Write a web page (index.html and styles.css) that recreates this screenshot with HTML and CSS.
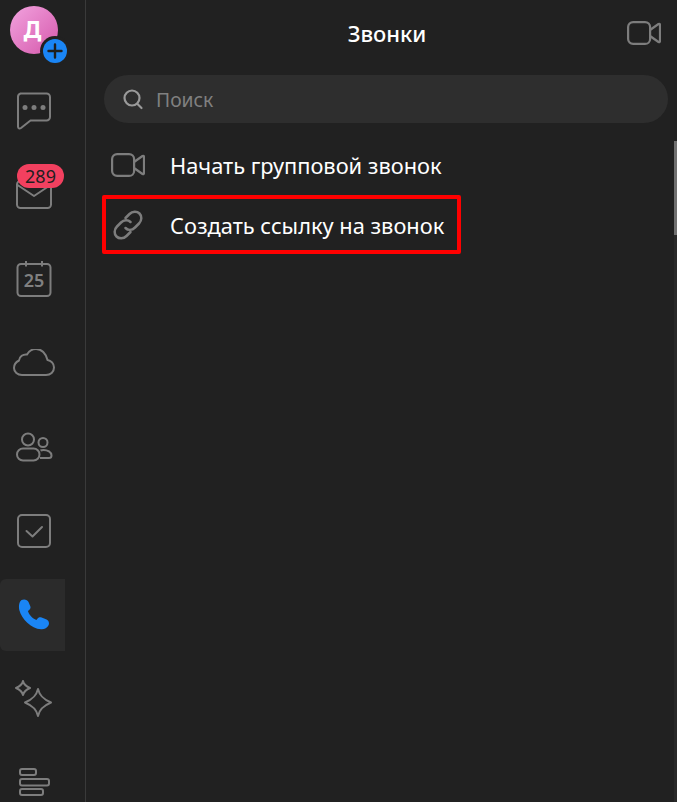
FILE: index.html
```html
<!DOCTYPE html>
<html lang="ru">
<head>
    <meta charset="UTF-8">
    <title>Звонки</title>
    <link rel="stylesheet" href="styles.css">
</head>
<body>
    <div class="app">
        <nav class="sidebar">
            <div class="avatar">
                <div class="avatar-circle">Д</div>
                <div class="avatar-add">
                    <svg width="24" height="24" viewBox="0 0 24 24"><circle cx="12" cy="12" r="12" fill="#1a85f5"/><path d="M12 5.500v13M5.500 12h13" stroke="#1f1f1f" stroke-width="2.400" stroke-linecap="round"/></svg>
                </div>
            </div>
            <div class="nav-list">
                <div class="nav-item">
                    <svg width="36" height="38" viewBox="0 0 36 38" fill="none" stroke="#7d7d7d" stroke-width="2"><path d="M4.500 1.500h26a3.500 3.500 0 0 1 3.500 3.500v20a3.500 3.500 0 0 1-3.500 3.500H14.500L5 36c-1.500 1-3 .5-3-1.500V5A3.500 3.500 0 0 1 4.500 1.500z" stroke-linejoin="round"/><circle cx="9" cy="15.500" r="2.500" fill="#7d7d7d" stroke="none"/><circle cx="18" cy="15.500" r="2.500" fill="#7d7d7d" stroke="none"/><circle cx="27" cy="15.500" r="2.500" fill="#7d7d7d" stroke="none"/></svg>
                </div>
                <div class="nav-item">
                    <svg width="38" height="30" viewBox="0 0 38 30" fill="none" stroke="#7d7d7d" stroke-width="2"><rect x="2" y="1" width="34" height="27" rx="3.500"/><path d="M2.500 5L19 16 35.500 5" stroke-linejoin="round"/></svg>
                    <span class="badge">289</span>
                </div>
                <div class="nav-item">
                    <div class="calendar">
                        <svg width="36" height="36" viewBox="0 0 36 36" fill="none" stroke="#7d7d7d" stroke-width="2"><rect x="1.500" y="3" width="33" height="32" rx="3.500"/><path d="M10 0v5.500M26 0v5.500"/></svg>
                        <span class="calendar-day">25</span>
                    </div>
                </div>
                <div class="nav-item">
                    <svg width="42" height="28" viewBox="0 1 42 28" fill="none" stroke="#7d7d7d" stroke-width="2"><path d="M9 27h24c4.500 0 8-3 8-7.500 0-4-3-7-6.500-7.500C33 5.500 28.500 1 23 1c-4 0-7 2-9 5.500-4-.5-7.500 2-8 6C3 14 1 16.500 1 20c0 4 3.500 7 8 7z" stroke-linejoin="round"/></svg>
                </div>
                <div class="nav-item">
                    <svg width="38" height="30" viewBox="0 0 38 30" fill="none" stroke="#7d7d7d" stroke-width="2"><circle cx="13" cy="7.500" r="6"/><rect x="2" y="16.500" width="22.500" height="12" rx="6"/><circle cx="28" cy="10.500" r="4.500"/><path d="M25.500 18.500c1-.5 2-.5 3-.5 4 0 8 2 8 5.500 0 1.500-1 2.500-2.500 2.500H25"/></svg>
                </div>
                <div class="nav-item">
                    <svg width="34" height="34" viewBox="0 0 34 34" fill="none" stroke="#7d7d7d" stroke-width="2"><rect x="1" y="1" width="32" height="32" rx="4"/><path d="M9.500 17l6 5.500 9.500-9.500" stroke-linecap="round" stroke-linejoin="round"/></svg>
                </div>
                <div class="nav-item nav-item-active">
                    <svg width="32" height="32" viewBox="0 0 32 32" fill="#1a85f5"><path d="M3.500 1C6 -.3 9.500.500 10.500 3l1.700 4c.7 1.700.3 3-1 4l-1.300 1c1 3.500 4.500 7.500 8.500 9l1.200-1.500c1-1.300 2.500-1.700 4-1.100l5 2c2.300 1.100 3 3.800 1.800 6-1.300 2.300-4.400 4.300-7.400 3.800C13 29.800 3.700 20 1.300 11 .5 7.300 1 2.700 3.500 1z"/></svg>
                </div>
                <div class="nav-item">
                    <svg width="38" height="38" viewBox="0 0 38 38" fill="none" stroke="#7d7d7d" stroke-width="2" stroke-linejoin="round"><path d="M8 1c.8 3.400 2.600 5.200 7 7-4.400 1.800-6.200 3.600-7 7-.8-3.400-2.600-5.200-7-7 4.400-1.800 6.200-3.600 7-7z"/><path d="M23 9c1.500 6.500 5 10 13 13.500C28 26 24.500 29.500 23 36c-1.500-6.500-5-10-13-13.500C18 19 21.500 15.500 23 9z"/></svg>
                </div>
                <div class="nav-item">
                    <svg width="32" height="30" viewBox="0 0 32 30" fill="none" stroke="#7d7d7d" stroke-width="2"><rect x="2" y="1" width="16" height="6" rx="2"/><rect x="2" y="11" width="29" height="6.500" rx="2"/><rect x="2" y="21" width="23" height="6" rx="2"/></svg>
                </div>
            </div>
        </nav>
        <main class="content">
            <header class="header">
                <h1 class="title">Звонки</h1>
                <svg class="header-icon" width="34" height="24" viewBox="0 0 34 24" fill="none" stroke="#7d7d7d" stroke-width="2.200" stroke-linejoin="round"><rect x="1.100" y="1.100" width="22" height="21.800" rx="5"/><path d="M23 9l8.500-6c1-.5 1.500 0 1.500 1v16c0 1-.5 1.500-1.500 1L23 15"/></svg>
            </header>
            <div class="search">
                <svg width="22" height="22" viewBox="0 0 22 22" fill="none" stroke="#9a9a9a" stroke-width="2.200" stroke-linecap="round"><circle cx="10" cy="10" r="7.500"/><path d="M15.500 16l4 4"/></svg>
                <span class="search-text">Поиск</span>
            </div>
            <div class="menu">
                <div class="menu-row">
                    <svg class="menu-icon" width="34" height="24" viewBox="0 0 34 24" fill="none" stroke="#7d7d7d" stroke-width="2.200" stroke-linejoin="round"><rect x="1.100" y="1.100" width="22" height="21.800" rx="5"/><path d="M23 9l8.500-6c1-.5 1.500 0 1.500 1v16c0 1-.5 1.500-1.500 1L23 15"/></svg>
                    <span>Начать групповой звонок</span>
                </div>
                <div class="menu-row">
                    <svg class="menu-icon" width="34" height="32" viewBox="-2 -1 34 32" fill="none" stroke="#7d7d7d" stroke-width="2.500" stroke-linecap="round"><path d="M12.500 8l4-4c3-3 7.500-3 10-.5s2.500 7-.5 10l-4 4c-3 3-7 3-9.500.5"/><path d="M17.500 22l-4 4c-3 3-7.500 3-10 .5s-2.500-7 .5-10l4-4c3-3 7-3 9.500-.5"/></svg>
                    <span>Создать ссылку на звонок</span>
                </div>
            </div>
            <div class="highlight"></div>
            <div class="scrollbar"></div>
        </main>
    </div>
</body>
</html>
```

FILE: styles.css
```css
* {
    box-sizing: border-box;
}

html, body {
    height: 100%;
}

body {
    margin: 0;
    font-family: "Noto Sans", sans-serif;
    background-color: #212121;
    color: #fff;
    overflow: hidden;
}

.app {
    display: flex;
    height: 802px;
    overflow: hidden;
}

.sidebar {
    width: 86px;
    flex-shrink: 0;
    border-right: 1px solid #3a3a3a;
}

.avatar {
    position: relative;
    width: 48px;
    height: 48px;
    margin: 6px 0 0 10px;
}

.avatar-circle {
    width: 48px;
    height: 48px;
    border-radius: 50%;
    background: linear-gradient(135deg, #f2a3df, #d558ab);
    font-size: 23px;
    font-weight: 700;
    line-height: 46px;
    text-align: center;
    padding-right: 3px;
}

.avatar-add {
    position: absolute;
    left: 30px;
    top: 30px;
    width: 30px;
    height: 30px;
    padding: 3px;
    border-radius: 50%;
    background-color: #212121;
}

.avatar-add svg {
    display: block;
}

.nav-list {
    display: flex;
    flex-direction: column;
    gap: 12px;
    margin-top: 21px;
}

.nav-item {
    position: relative;
    flex-shrink: 0;
    width: 65px;
    height: 72px;
    padding-left: 3px;
    display: flex;
    align-items: center;
    justify-content: center;
}

.nav-item-active {
    background-color: #2b2b2b;
    border-radius: 6px 0 0 6px;
}

.badge {
    position: absolute;
    left: 17px;
    top: 5px;
    width: 47px;
    height: 24px;
    border-radius: 12px;
    background-color: #f2405f;
    color: #1f1f1f;
    font-size: 18px;
    line-height: 24px;
    text-align: center;
}

.calendar {
    position: relative;
    width: 36px;
    height: 36px;
}

.calendar svg {
    display: block;
}

.calendar-day {
    position: absolute;
    left: 0;
    right: 0;
    top: 6px;
    color: #808080;
    font-size: 18px;
    font-weight: 600;
    line-height: 26px;
    text-align: center;
}

.content {
    position: relative;
    flex: 1;
    padding: 0 9px 0 18px;
}

.header {
    position: relative;
    height: 75px;
    display: flex;
    justify-content: center;
    align-items: flex-start;
}

.title {
    margin: 17px 0 0;
    padding-left: 2px;
    font-size: 22px;
    font-weight: 500;
    line-height: 32px;
}

.header-icon {
    position: absolute;
    right: 7px;
    top: 21px;
}

.search {
    display: flex;
    align-items: center;
    gap: 12px;
    height: 48px;
    padding-left: 18px;
    border-radius: 24px;
    background-color: #2e2e2e;
}

.search-text {
    color: #808080;
    font-size: 19.3px;
}

.menu {
    margin-top: 12px;
    padding-left: 7px;
}

.menu-row {
    display: flex;
    align-items: center;
    gap: 25px;
    height: 60px;
    font-size: 21.8px;
}

.menu-row span {
    white-space: nowrap;
}

.menu-icon {
    flex-shrink: 0;
}

.highlight {
    position: absolute;
    left: 16px;
    top: 195px;
    width: 359px;
    height: 59px;
    border: 4px solid #f00;
    border-radius: 2px;
}

.scrollbar {
    position: absolute;
    right: 0;
    top: 141px;
    bottom: 0;
    width: 3px;
    background-color: #292929;
    border-top: 94px solid #707070;
}
```
